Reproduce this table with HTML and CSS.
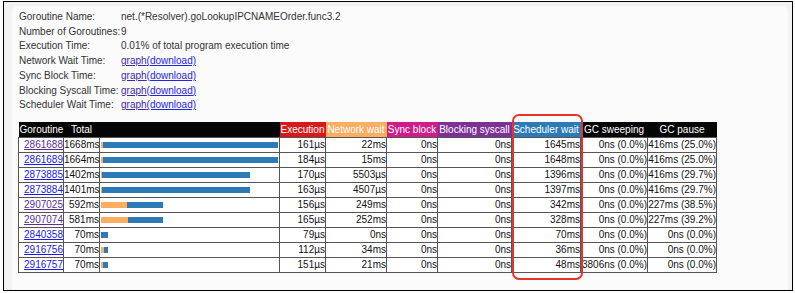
FILE: index.html
```html
<!DOCTYPE html>
<html>
<head>
<meta charset="utf-8">
<link rel="stylesheet" href="styles.css">
</head>
<body>
<div class="frame">
  <div class="panel">
    <div class="summary">
      <div class="lbl">Goroutine Name:</div><div>net.(*Resolver).goLookupIPCNAMEOrder.func3.2</div>
      <div class="lbl">Number of Goroutines:</div><div>9</div>
      <div class="lbl">Execution Time:</div><div>0.01% of total program execution time</div>
      <div class="lbl">Network Wait Time:</div><div><a class="v" href="#">graph</a><a href="#">(download)</a></div>
      <div class="lbl">Sync Block Time:</div><div><a class="v" href="#">graph</a><a href="#">(download)</a></div>
      <div class="lbl">Blocking Syscall Time:</div><div><a class="v" href="#">graph</a><a href="#">(download)</a></div>
      <div class="lbl">Scheduler Wait Time:</div><div><a class="v" href="#">graph</a><a href="#">(download)</a></div>
    </div>
    <div class="tablewrap">
      <table class="details">
        <colgroup>
          <col class="c-id"><col class="c-total"><col class="c-bar"><col class="c-exec"><col class="c-io"><col class="c-block"><col class="c-sys"><col class="c-sched"><col class="c-sweep"><col class="c-gc">
        </colgroup>
        <tr>
          <th class="left">Goroutine</th>
          <th>Total</th>
          <th></th>
          <th class="h-exec">Execution</th>
          <th class="h-io">Network wait</th>
          <th class="h-block">Sync block</th>
          <th class="h-sys">Blocking syscall</th>
          <th class="h-sched">Scheduler wait</th>
          <th>GC sweeping</th>
          <th>GC pause</th>
        </tr>
        <tr><td><a class="v" href="#">2861688</a></td><td>1668ms</td><td class="bar"><div class="sbar"><span class="io" style="width:2px"></span><span class="sched" style="width:175px"></span></div></td><td>161µs</td><td>22ms</td><td>0ns</td><td>0ns</td><td>1645ms</td><td>0ns (0.0%)</td><td>416ms (25.0%)</td></tr>
        <tr><td><a href="#">2861689</a></td><td>1664ms</td><td class="bar"><div class="sbar"><span class="io" style="width:2px"></span><span class="sched" style="width:175px"></span></div></td><td>184µs</td><td>15ms</td><td>0ns</td><td>0ns</td><td>1648ms</td><td>0ns (0.0%)</td><td>416ms (25.0%)</td></tr>
        <tr><td><a href="#">2873885</a></td><td>1402ms</td><td class="bar"><div class="sbar"><span class="io" style="width:1px"></span><span class="sched" style="width:148px"></span></div></td><td>170µs</td><td>5503µs</td><td>0ns</td><td>0ns</td><td>1396ms</td><td>0ns (0.0%)</td><td>416ms (29.7%)</td></tr>
        <tr><td><a href="#">2873884</a></td><td>1401ms</td><td class="bar"><div class="sbar"><span class="io" style="width:0.5px"></span><span class="sched" style="width:148px"></span></div></td><td>163µs</td><td>4507µs</td><td>0ns</td><td>0ns</td><td>1397ms</td><td>0ns (0.0%)</td><td>416ms (29.7%)</td></tr>
        <tr><td><a class="v" href="#">2907025</a></td><td>592ms</td><td class="bar"><div class="sbar"><span class="io" style="width:26px"></span><span class="sched" style="width:36px"></span></div></td><td>156µs</td><td>249ms</td><td>0ns</td><td>0ns</td><td>342ms</td><td>0ns (0.0%)</td><td>227ms (38.5%)</td></tr>
        <tr><td><a class="v" href="#">2907074</a></td><td>581ms</td><td class="bar"><div class="sbar"><span class="io" style="width:27px"></span><span class="sched" style="width:35px"></span></div></td><td>165µs</td><td>252ms</td><td>0ns</td><td>0ns</td><td>328ms</td><td>0ns (0.0%)</td><td>227ms (39.2%)</td></tr>
        <tr><td><a href="#">2840358</a></td><td>70ms</td><td class="bar"><div class="sbar"><span class="sched" style="width:7px"></span></div></td><td>79µs</td><td>0ns</td><td>0ns</td><td>0ns</td><td>70ms</td><td>0ns (0.0%)</td><td>0ns (0.0%)</td></tr>
        <tr><td><a href="#">2916756</a></td><td>70ms</td><td class="bar"><div class="sbar"><span class="io" style="width:3px"></span><span class="sched" style="width:4px"></span></div></td><td>112µs</td><td>34ms</td><td>0ns</td><td>0ns</td><td>36ms</td><td>0ns (0.0%)</td><td>0ns (0.0%)</td></tr>
        <tr><td><a href="#">2916757</a></td><td>70ms</td><td class="bar"><div class="sbar"><span class="io" style="width:2px"></span><span class="sched" style="width:5px"></span></div></td><td>151µs</td><td>21ms</td><td>0ns</td><td>0ns</td><td>48ms</td><td>3806ns (0.0%)</td><td>0ns (0.0%)</td></tr>
      </table>
      <div class="highlight"></div>
    </div>
  </div>
</div>
</body>
</html>
```

FILE: styles.css
```css
html, body {
  margin: 0;
  padding: 0;
  background: #ffffff;
}
body {
  font-family: "Liberation Sans", Arial, sans-serif;
  font-size: 10px;
  color: #111;
}
.frame {
  box-sizing: border-box;
  margin: 1px 0 0 3px;
  width: 790px;
  height: 290px;
  border: 1px solid #000;
  background: #f3f3f3;
  overflow: hidden;
  display: flex;
  flex-direction: column;
}
.panel {
  flex: 1;
  margin: 4px 4px 0 8px;
  padding: 4px 0 0 7px;
  background: #fbfbfb;
  border-radius: 6px 6px 0 0;
}
.summary {
  display: grid;
  grid-template-columns: 102px auto;
  line-height: 14.7px;
  color: #333;
}
.summary a {
  color: #2424e6;
  text-decoration: underline;
}
.summary a.v {
  color: #3b2aa8;
}
.tablewrap {
  position: relative;
  margin: 9px 0 0 -1px;
}
.details {
  border-collapse: collapse;
  table-layout: fixed;
  width: 698px;
  background: #fff;
}
.c-id { width: 45px; }
.c-total { width: 36px; }
.c-bar { width: 180px; }
.c-exec { width: 46px; }
.c-io { width: 61px; }
.c-block { width: 51px; }
.c-sys { width: 74px; }
.c-sched { width: 69px; }
.c-sweep { width: 67px; }
.c-gc { width: 69px; }
.details th {
  background: #050505;
  color: #fff;
  font-weight: normal;
  line-height: 15px;
  padding: 0;
  border: 0;
  white-space: nowrap;
  text-align: center;
}
.details th.left { text-align: left; padding-left: 1px; }
.details th.h-exec { background: #d7191c; }
.details th.h-io { background: #fdae61; }
.details th.h-block { background: #d01c8b; }
.details th.h-sys { background: #7b3294; }
.details th.h-sched { background: #2c7bb6; }
.details td {
  border: 1px solid #555;
  padding: 0;
  line-height: 14px;
  text-align: right;
  white-space: nowrap;
  color: #111;
}
.details td a {
  color: #1a1aee;
  text-decoration: underline;
}
.details td a.v {
  color: #5a2d9a;
}
.details td.bar {
  text-align: left;
  padding-left: 1px;
}
.sbar {
  display: flex;
  height: 6px;
  align-items: stretch;
}
.sbar span {
  display: block;
  height: 6px;
}
.sbar .io { background: #fdae61; }
.sbar .sched { background: #2c7bb6; }
.highlight {
  position: absolute;
  left: 494px;
  top: -8px;
  width: 67px;
  height: 162px;
  border: 2px solid #e8332b;
  border-radius: 7px;
  pointer-events: none;
}
```
